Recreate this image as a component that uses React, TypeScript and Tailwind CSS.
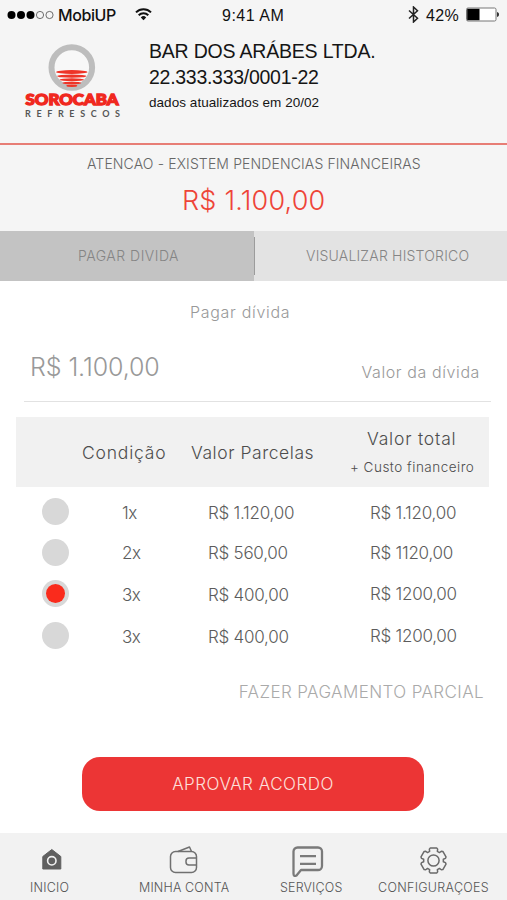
import React from 'react';

interface Option {
  count: string;
  installment: string;
  total: string;
  height: string;
  totalPadding: string;
  selected?: boolean;
}

const options: Option[] = [
  { count: '1x', installment: 'R$ 1.120,00', total: 'R$ 1.120,00', height: 'h-10', totalPadding: 'pt-[1px]' },
  { count: '2x', installment: 'R$ 560,00', total: 'R$ 1120,00', height: 'h-[41px]', totalPadding: 'pt-[1px]' },
  { count: '3x', installment: 'R$ 400,00', total: 'R$ 1200,00', height: 'h-[42px]', totalPadding: 'pt-0', selected: true },
  { count: '3x', installment: 'R$ 400,00', total: 'R$ 1200,00', height: 'h-[42px]', totalPadding: 'pt-0' },
];

// One tooth of the gear as [radius, angle] pairs, repeated every 60 degrees
const tooth = [[12.1, -20], [13, -14], [13, 14], [12.1, 20], [9.9, 23], [9.9, 37]];

const gearPoints = [0, 60, 120, 180, 240, 300]
  .flatMap((turn) =>
    tooth.map(([radius, angle]) => {
      const rad = ((turn + angle) * Math.PI) / 180;
      return `${(14.5 + radius * Math.sin(rad)).toFixed(2)},${(16.5 - radius * Math.cos(rad)).toFixed(2)}`;
    })
  )
  .join(' ');

const StatusBar: React.FC = () => (
  <div className="flex h-[29px] items-center pl-[7px] pr-[7px] text-[16px] text-[#111] font-['Liberation_Sans',sans-serif]">
    <svg width="47" height="10" viewBox="0 0 47 10">
      <circle cx="4.5" cy="5" r="4" fill="#000" />
      <circle cx="14" cy="5" r="4" fill="#000" />
      <circle cx="23.5" cy="5" r="4" fill="#000" />
      <circle cx="33" cy="5" r="3.6" fill="none" stroke="#333" strokeWidth=".7" />
      <circle cx="42.5" cy="5" r="3.6" fill="none" stroke="#333" strokeWidth=".7" />
    </svg>
    <span className="ml-1 w-[77px] font-['Inter',sans-serif] font-medium tracking-[-0.4px]">MobiUP</span>
    <svg width="17" height="13" viewBox="0 0 17 13" fill="none" stroke="#111" strokeWidth="2">
      <path d="M1 4.4a10.6 10.6 0 0 1 15 0M3.7 7.2a6.8 6.8 0 0 1 9.6 0" />
      <path d="M5.8 9.4a3.9 3.9 0 0 1 5.4 0L8.5 12.2z" fill="#111" stroke="none" />
    </svg>
    <span className="ml-[70px] w-[186px] pt-[2px] tracking-[0.5px]">9:41 AM</span>
    <svg width="11" height="17" viewBox="0 0 11 17" fill="none" stroke="#222" strokeWidth="1.5">
      <path d="M1 4.5l8.5 7.8L5.5 16V1l4 3.7L1 12.5" />
    </svg>
    <span className="ml-[7px] w-[40px] pt-[2px] tracking-[0.4px]">42%</span>
    <svg width="34" height="15" viewBox="0 0 34 15">
      <rect x=".5" y="1" width="29.5" height="13" rx="1.5" fill="#fff" stroke="#777" />
      <rect x="1.2" y="1.8" width="12.3" height="11.4" fill="#000" />
      <path d="M31 5c1.6.5 2 1.4 2 2.5s-.4 2-2 2.5z" fill="#333" />
    </svg>
  </div>
);

const Logo: React.FC = () => (
  <svg width="110" height="84" viewBox="0 0 110 84">
    <circle cx="54.8" cy="31.5" r="20.3" fill="#f8f8f8" stroke="#bdbdbd" strokeWidth="6" />
    <g fill="#ee3428">
      <ellipse cx="54.8" cy="36" rx="15.7" ry="1.9" />
      <ellipse cx="54.8" cy="40.2" rx="14.6" ry="1.6" />
      <ellipse cx="54.8" cy="43.8" rx="12.3" ry="1.5" />
      <ellipse cx="54.8" cy="47" rx="9.5" ry="1.3" />
      <ellipse cx="54.8" cy="49.7" rx="5.5" ry="1.2" />
    </g>
    <text x="8.5" y="69" fontFamily="Lato, sans-serif" fontWeight="900" fontSize="15" textLength="93" lengthAdjust="spacingAndGlyphs" fill="#f0281e" stroke="#f0281e" strokeWidth="1.3">SOROCABA</text>
    <text x="8" y="80.5" fontFamily="Lato, sans-serif" fontWeight="700" fontSize="9" textLength="95" fill="#555">REFRESCOS</text>
  </svg>
);

const Header: React.FC = () => (
  <div className="flex h-[116px] border-b-2 border-[#e77d75] font-normal">
    <div className="w-[149px] pl-[17px] pt-[7px]">
      <Logo />
    </div>
    <div className="pt-[9px] text-[#151515] font-['Liberation_Sans',sans-serif]">
      <div className="text-[19.5px] leading-[26px] tracking-[-0.2px]">BAR DOS ARÁBES LTDA.</div>
      <div className="text-[19.5px] leading-[26px] tracking-[-0.28px]">22.333.333/0001-22</div>
      <div className="pt-px text-[13.5px] leading-[24px] tracking-[0.05px]">dados atualizados em 20/02</div>
    </div>
  </div>
);

const Tabs: React.FC = () => (
  <div className="flex h-[50px] items-center bg-[#e3e3e3] text-[14px] text-[#858585]">
    <div className="flex h-full w-[254px] items-center bg-[#c3c3c3] pb-px pl-[78px] tracking-[0.5px]">PAGAR DIVIDA</div>
    <div className="h-[38px] w-px bg-[#9c9c9c]" />
    <div className="pb-px pl-[51px] tracking-[0.2px]">VISUALIZAR HISTORICO</div>
  </div>
);

const OptionsTable: React.FC = () => (
  <div className="mx-4 mt-[15px] w-[473px]">
    <div className="flex h-[70px] bg-[#f1f1f1] text-[17.5px] leading-6 text-[#4d4d4d]">
      <div className="w-[108px] shrink-0 pl-[66px] pt-6 tracking-[0.8px]">Condição</div>
      <div className="w-[226px] shrink-0 pl-[67px] pt-6 whitespace-nowrap tracking-[0.55px]">Valor Parcelas</div>
      <div>
        <div className="pl-[17px] pt-[10px] tracking-[0.8px]">Valor total</div>
        <div className="pt-[4px] text-[13.5px] whitespace-nowrap tracking-[0.5px]">+ Custo financeiro</div>
      </div>
    </div>
    <div className="pt-[5px] text-[17px] leading-6 text-[#5c5c5c]">
      {options.map((option, index) => (
        <div key={index} className={`flex items-center ${option.height}`}>
          <div className="mb-px ml-[26px] flex size-[27px] items-center justify-center rounded-full bg-[#d8d8d8]">
            {option.selected && <div className="size-[19px] rounded-full bg-[#fa2b1c]" />}
          </div>
          <div className="ml-[53px] w-[86px] pt-[1px] tracking-[-0.5px]">{option.count}</div>
          <div className="w-[162px] pt-[1px] tracking-[-0.25px]">{option.installment}</div>
          <div className={`tracking-[-0.25px] ${option.totalPadding}`}>{option.total}</div>
        </div>
      ))}
    </div>
  </div>
);

const BottomNav: React.FC = () => (
  <div className="flex h-[67px] bg-[#f2f2f2] text-[12.5px] leading-[18px] text-[#555] [&_span]:whitespace-nowrap">
    <div className="flex w-[109px] flex-col pt-[11px]">
      <svg className="ml-[38px]" width="28" height="35" viewBox="0 0 28 35">
        <path d="M13.8 5.5L22.8 12.5V25H4.8V12.5z" fill="#606060" stroke="#606060" strokeLinejoin="round" />
        <circle cx="13.8" cy="16.8" r="4.2" fill="none" stroke="#f2f2f2" strokeWidth="1.6" />
      </svg>
      <span className="ml-[30px] tracking-[0.2px]">INICIO</span>
    </div>
    <div className="flex w-[147px] flex-col pt-[11px]">
      <svg className="ml-[60px]" width="30" height="35" viewBox="0 0 30 35" fill="none" stroke="#707070" strokeWidth="1.5" strokeLinejoin="round">
        <rect x="1.5" y="7.5" width="26" height="21" rx="5" />
        <path d="M27.5 14h-7.5a3 3 0 0 0-3 3v1a3 3 0 0 0 3 3h7.5" />
        <path d="M9 7.5L20.5 3l2 4.5" />
      </svg>
      <span className="ml-[30px] tracking-[0.15px]">MINHA CONTA</span>
    </div>
    <div className="flex w-[106px] flex-col pt-[11px]">
      <svg className="ml-[36px]" width="32" height="35" viewBox="0 0 32 35" fill="none" stroke="#7a7a7a" strokeWidth="2.3" strokeLinejoin="round">
        <path d="M5.5 3.5h20.500a4 4 0 0 1 4 4v14.500a4 4 0 0 1-4 4H9L4.500 31.500Q1.500 33 1.500 29.500V7.500a4 4 0 0 1 4-4z" />
        <path d="M8 12.2h16M8 19.8h16" />
      </svg>
      <span className="ml-[24px] tracking-[0.15px]">SERVIÇOS</span>
    </div>
    <div className="flex flex-col pt-[11px]">
      <svg className="ml-[57px]" width="30" height="35" viewBox="0 0 30 35" fill="none" stroke="#6a6a6a" strokeWidth="1.5" strokeLinejoin="round">
        <polygon points={gearPoints} />
        <circle cx="14.5" cy="16.5" r="5.6" />
      </svg>
      <span className="ml-[16px] tracking-[0.3px]">CONFIGURAÇOES</span>
    </div>
  </div>
);

const App: React.FC = () => {
  return (
    <div className="flex h-[900px] w-[507px] flex-col overflow-hidden bg-white font-light font-['Inter',sans-serif]">
      <div className="h-[231px] bg-[#f5f5f5]">
        <StatusBar />
        <Header />
        <div className="pl-[87px] pt-[9px] text-[14px] leading-5 tracking-[0.13px] text-[#666] whitespace-nowrap">ATENCAO - EXISTEM PENDENCIAS FINANCEIRAS</div>
        <div className="pl-[182px] pt-[9px] text-[27px] leading-9 tracking-[0.2px] text-[#ee4438]">R$ 1.100,00</div>
      </div>
      <Tabs />
      <div className="pl-[190px] pt-[19px] text-[16px] leading-6 tracking-[0.7px] text-[#999]">Pagar dívida</div>
      <div className="ml-6 mt-[25px] flex h-[53px] w-[467px] justify-between border-b border-[#e2e2e2] text-[#999]">
        <div className="pl-[6px] text-[25px] leading-[36px] tracking-[-0.1px]">R$ 1.100,00</div>
        <div className="pr-[11px] pt-[11px] text-[16px] leading-6 tracking-[0.6px]">Valor da dívida</div>
      </div>
      <OptionsTable />
      <div className="mt-[23px] pr-[23px] text-right text-[17px] leading-6 tracking-[0.4px] text-[#aaa]">FAZER PAGAMENTO PARCIAL</div>
      <button className="ml-[82px] mt-[53px] h-[54px] w-[342px] rounded-[18px] bg-[#ec3535] pt-[2px] text-[17px] tracking-[0.5px] text-[#fde0dc]">APROVAR ACORDO</button>
      <div className="mt-auto">
        <BottomNav />
      </div>
    </div>
  );
};

export default App;
